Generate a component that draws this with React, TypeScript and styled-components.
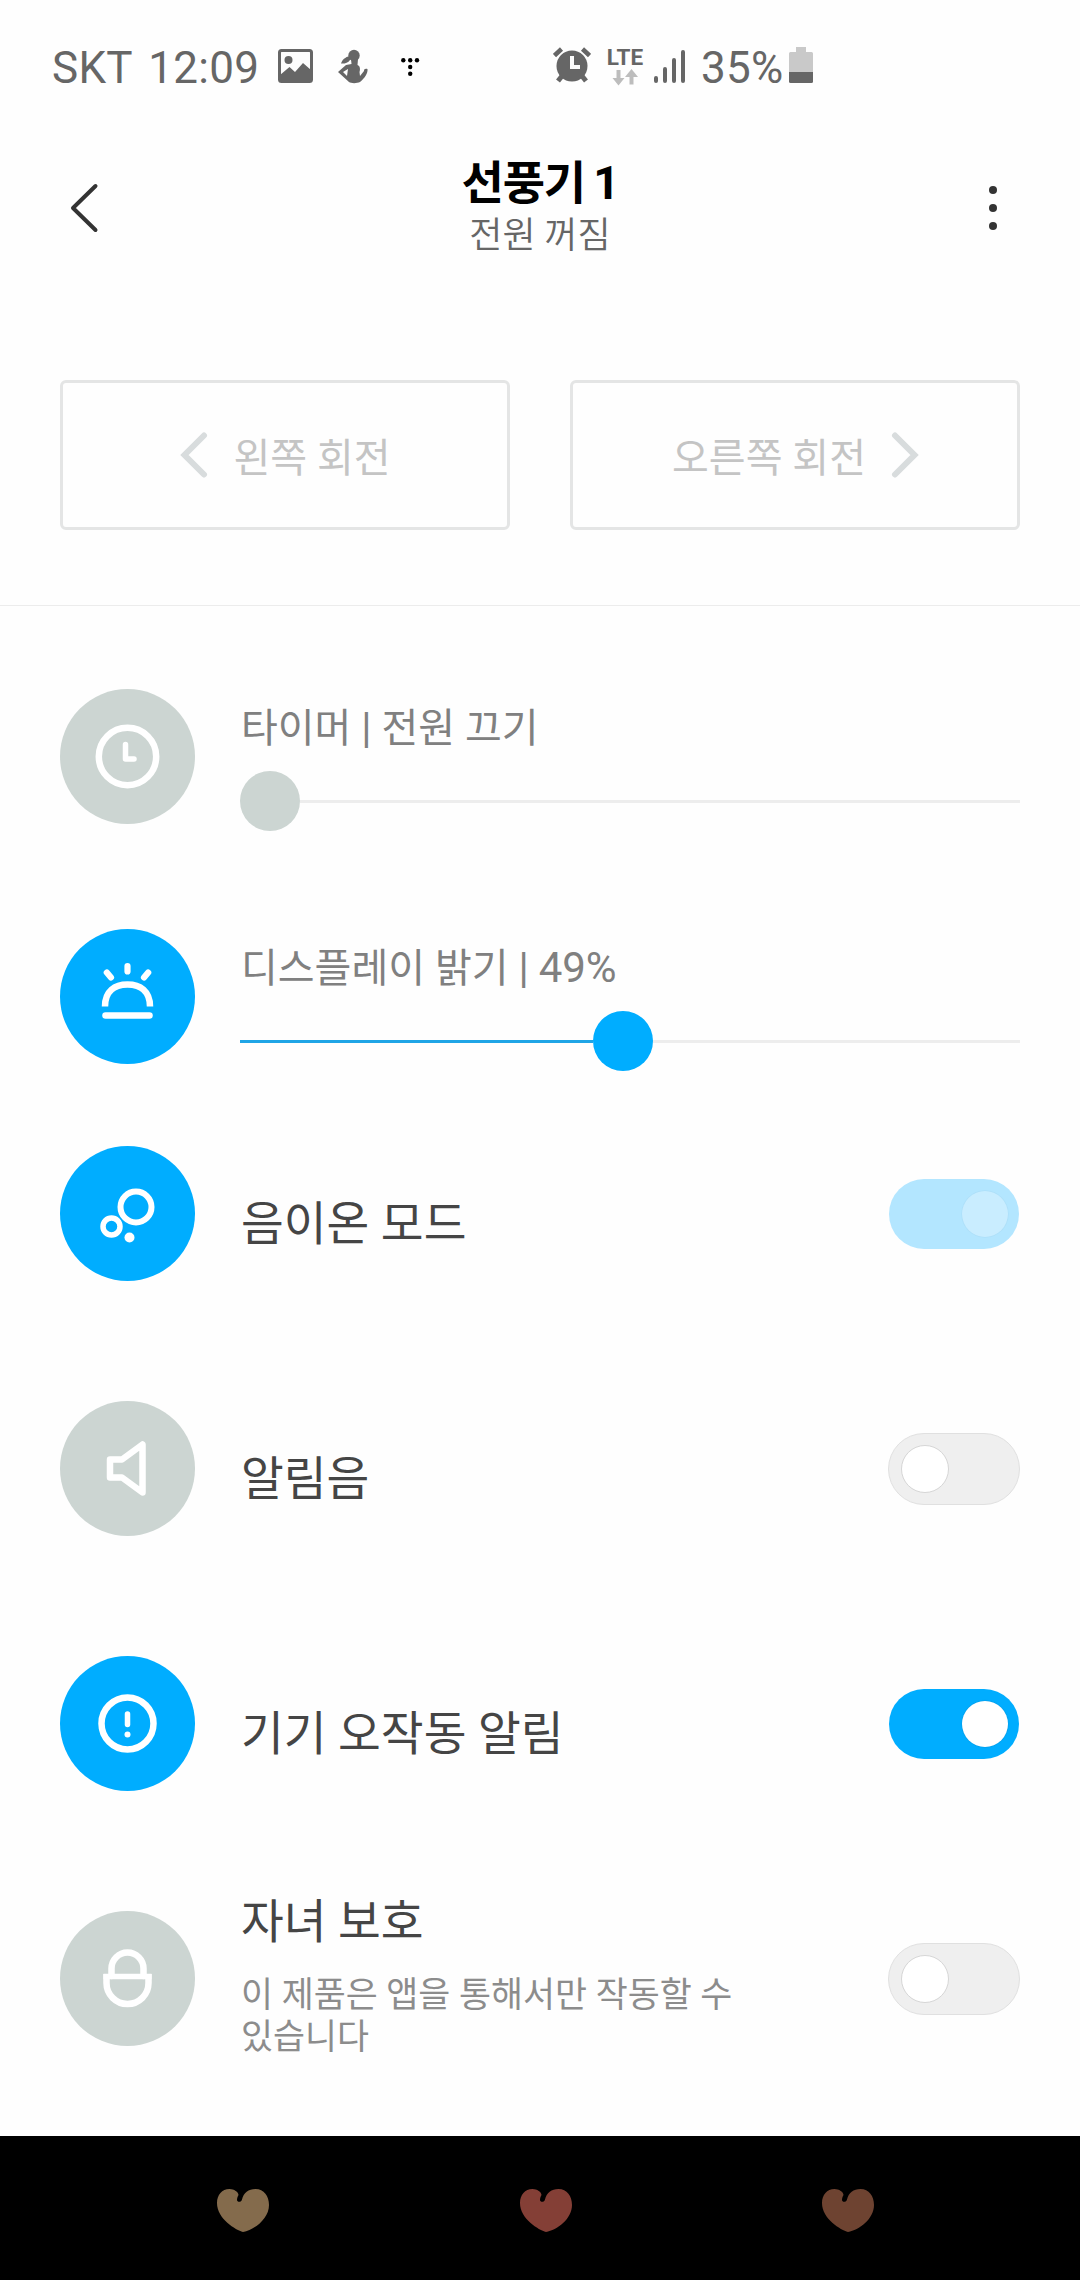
import React from "react";
import styled, { createGlobalStyle } from "styled-components";

const BLUE = "#00adff";
const GREY = "#ccd5d2";
const PAPER = "#fefefe";

const GlobalStyle = createGlobalStyle`
  * { box-sizing: border-box; }
  html, body { margin: 0; padding: 0; background: ${PAPER}; }
  body { font-family: Roboto, "Noto Sans CJK KR", sans-serif; }
  svg { display: block; }
`;

const Screen = styled.div`
  width: 1080px;
  height: 2280px;
  display: flex;
  flex-direction: column;
  background: ${PAPER};
  overflow: hidden;
`;

/* status bar */
const StatusBar = styled.div`
  height: 134px;
  display: flex;
  align-items: flex-start;
  padding: 42px 0 0 52px;
  color: #666;
  font: 400 44px/52px Roboto, sans-serif;
  white-space: nowrap;
`;
const StatusText = styled.span<{ $width: number; $left?: number }>`
  width: ${(p) => p.$width}px;
  margin-left: ${(p) => p.$left ?? 0}px;
  letter-spacing: 0.3px;
  word-spacing: 5px;
`;
const StatusIcon = styled.svg<{ $left: number; $top?: number }>`
  flex: none;
  margin-left: ${(p) => p.$left}px;
  margin-top: ${(p) => p.$top ?? 0}px;
`;
const Network = styled.div`
  width: 36px;
  margin: 3px 0 0 16px;
  display: flex;
  flex-direction: column;
  align-items: center;
  font: 700 22.5px/24px Roboto, sans-serif;
`;

/* header */
const Header = styled.header`
  height: 246px;
  display: grid;
  grid-template-columns: 200px 1fr 200px;
  align-items: start;
`;
const IconButton = styled.button<{ $pad: string }>`
  border: 0;
  background: none;
  padding: ${(p) => p.$pad};
`;
const Titles = styled.div`
  display: flex;
  flex-direction: column;
  align-items: center;
  padding-top: 19px;
`;
const Title = styled.h1`
  margin: 0;
  color: #000;
  font: 700 46px/60px Roboto, "Noto Sans CJK KR", sans-serif;
  letter-spacing: -1.2px;
  word-spacing: -2px;
`;
const Subtitle = styled.div`
  padding-top: 1px;
  color: #666;
  font: 350 36px/44px Roboto, "Noto Sans CJK KR", sans-serif;
`;

/* rotate buttons */
const RotateBar = styled.div`
  height: 226px;
  display: grid;
  grid-template-columns: 450px 450px;
  gap: 60px;
  padding: 0 60px;
  align-items: start;
  border-bottom: 1px solid #ececec;
`;
const RotateButton = styled.button`
  height: 150px;
  display: flex;
  align-items: center;
  justify-content: center;
  gap: 25px;
  border: 3px solid #e4e5e5;
  border-radius: 6px;
  background: ${PAPER};
  color: #c4c4c4;
  padding: 0 0 0 1px;
  font: 400 40px/60px Roboto, "Noto Sans CJK KR", sans-serif;
`;
const RotateText = styled.span`
  padding-top: 7px;
`;

/* settings */
const Settings = styled.main`
  flex: 1;
  padding: 83px 60px 0;
`;
const Group = styled.section<{ $gap: number; $top?: number }>`
  display: flex;
  flex-direction: column;
  gap: ${(p) => p.$gap}px;
  margin-top: ${(p) => p.$top ?? 0}px;
`;
const Row = styled.div`
  height: 135px;
  display: grid;
  grid-template-columns: 135px 1fr auto;
  grid-template-rows: 135px;
  column-gap: 45px;
  align-items: center;
`;
const Badge = styled.div<{ $on?: boolean }>`
  width: 135px;
  height: 135px;
  border-radius: 50%;
  background: ${(p) => (p.$on ? BLUE : GREY)};
`;
const SliderBody = styled.div`
  grid-column: 2 / 4;
  align-self: start;
`;
const SliderLabel = styled.div`
  height: 82px;
  padding: 9px 0 0 1px;
  color: #808080;
  font: 400 40px/60px Roboto, "Noto Sans CJK KR", sans-serif;
  white-space: nowrap;
`;
const SliderValue = styled.span`
  font-size: 42px;
`;
const SliderTrack = styled.div`
  display: flex;
  height: 60px;
`;
const SliderFill = styled.div`
  flex: none;
  height: 3px;
  margin-top: 29px;
  background: #1fa5e6;
`;
const SliderRest = styled.div`
  flex: 1;
  height: 3px;
  margin-top: 29px;
  background: #ededed;
`;
const SliderKnob = styled.div<{ $on?: boolean }>`
  flex: none;
  width: 60px;
  height: 60px;
  border-radius: 50%;
  background: ${(p) => (p.$on ? BLUE : GREY)};
`;
const SwitchBody = styled.div<{ $hint: boolean }>`
  padding: ${(p) => (p.$hint ? "0 0 10px 1px" : "21px 0 0 1px")};
`;
const SwitchLabel = styled.div`
  color: #454545;
  font: 400 46.5px/64px Roboto, "Noto Sans CJK KR", sans-serif;
`;
const Hint = styled.div`
  max-width: 560px;
  margin-top: 20px;
  color: #8c8c8c;
  font: 400 34.8px/42px Roboto, "Noto Sans CJK KR", sans-serif;
  word-break: keep-all;
`;
const Toggle = styled.div<{ $on?: boolean; $disabled?: boolean }>`
  width: ${(p) => (p.$on ? 130 : 132)}px;
  height: ${(p) => (p.$on ? 70 : 72)}px;
  margin-right: ${(p) => (p.$on ? 1 : 0)}px;
  padding: 0 ${(p) => (p.$on ? 11 : 12)}px;
  display: flex;
  align-items: center;
  justify-content: ${(p) => (p.$on ? "flex-end" : "flex-start")};
  border-radius: 36px;
  border: ${(p) => (p.$on ? "0" : "1px solid #e0e0e0")};
  background: ${(p) => (p.$disabled ? "#b3e6ff" : p.$on ? BLUE : "#efefef")};
`;
const ToggleKnob = styled.div<{ $on?: boolean; $disabled?: boolean }>`
  width: ${(p) => (p.$on ? 46 : 48)}px;
  height: ${(p) => (p.$on ? 46 : 48)}px;
  border-radius: 50%;
  border: ${(p) => (p.$on ? "0" : "1px solid #d6d6d6")};
  background: ${(p) => (p.$disabled ? "#c9edff" : "#fff")};
  box-shadow: ${(p) =>
    p.$on ? `0 0 1px 0.5px rgba(0, 70, 110, ${p.$disabled ? 0.06 : 0.18})` : "none"};
`;

/* navigation bar */
const NavBar = styled.nav`
  height: 144px;
  padding: 53px 206px 0 217px;
  display: flex;
  justify-content: space-between;
  background: #000;
`;

const Heart = ({ color }: { color: string }) => (
  <svg width="52" height="43" viewBox="0 0 52 43">
    <path
      fill={color}
      d="M26 43C19 41 0 30 0 14C0 6 5 0 12.500 0C17 0 21.500 3 21.500 6C20.500 8 20 9 20 11C20 13.500 24.500 13.500 25 10.500C26.500 4 31.500 0 38.500 0C47 0 52 7 52 16C52 30 37 41 26 43Z"
    />
  </svg>
);

type GlyphName = "timer" | "brightness" | "ion" | "sound" | "alert" | "lock";

const glyphs: Record<GlyphName, React.ReactNode> = {
  timer: (
    <>
      <circle cx="67.500" cy="67.500" r="28.700" strokeWidth="6.500" />
      <path d="M65.500 55.500V70H74" strokeWidth="5.500" />
    </>
  ),
  brightness: (
    <>
      <path d="M45.500 86.500H89.500" strokeWidth="6.500" />
      <path d="M45 77.500C45 62 55 55.500 67.500 55.500S90 62 90 77.500" strokeWidth="6.500" strokeLinecap="butt" />
      <path d="M67.500 37V42.500M46.800 43.500L51 48.500M88.200 43.500L84 48.500" strokeWidth="6.200" />
    </>
  ),
  ion: (
    <>
      <circle cx="76" cy="61" r="15.500" strokeWidth="6" />
      <circle cx="51.500" cy="80.500" r="8.500" strokeWidth="5.500" />
      <circle cx="69.500" cy="91.500" r="5" fill="#fff" stroke="none" />
    </>
  ),
  sound: <path d="M50 58.500H62L82.500 43.500V91.500L62 76.500H50Z" strokeWidth="6.500" />,
  alert: (
    <>
      <circle cx="67.500" cy="67.500" r="26" strokeWidth="6.500" />
      <path d="M67.500 58V68.500" strokeWidth="5.500" />
      <circle cx="67.500" cy="78.500" r="3" fill="#fff" stroke="none" />
    </>
  ),
  lock: (
    <>
      <path d="M43.500 65.500H91.500" strokeWidth="5.500" strokeLinecap="butt" />
      <path d="M51.500 65V57.500A16 16 0 0 1 83.500 57.500V65" strokeWidth="6.500" />
      <path d="M46.500 63V72A21 21 0 0 0 88.500 72V63" strokeWidth="6.500" strokeLinecap="butt" />
    </>
  ),
};

const Glyph = ({ name }: { name: GlyphName }) => (
  <svg width="135" height="135" viewBox="0 0 135 135" fill="none" stroke="#fff" strokeLinecap="round" strokeLinejoin="round">
    {glyphs[name]}
  </svg>
);

const Chevron = ({ right }: { right?: boolean }) => (
  <svg width="28" height="46" viewBox="0 0 28 46" fill="none" stroke="#d8dcdd" strokeWidth="6" strokeLinecap="round">
    <path d={right ? "M4 3.500L23.500 23L4 42.500" : "M24 3.500L4.500 23L24 42.500"} />
  </svg>
);

const sliders: { icon: GlyphName; label: string; state: string; value: number; on: boolean }[] = [
  { icon: "timer", label: "타이머", state: "전원 끄기", value: 0, on: false },
  { icon: "brightness", label: "디스플레이 밝기", state: "49%", value: 49, on: true },
];

const switches: { icon: GlyphName; label: string; hint?: string; on: boolean; disabled?: boolean }[] = [
  { icon: "ion", label: "음이온 모드", on: true, disabled: true },
  { icon: "sound", label: "알림음", on: false },
  { icon: "alert", label: "기기 오작동 알림", on: true },
  { icon: "lock", label: "자녀 보호", hint: "이 제품은 앱을 통해서만 작동할 수 있습니다", on: false },
];

export default function App() {
  return (
    <Screen>
      <GlobalStyle />
      <StatusBar>
        <StatusText $width={226}>SKT 12:09</StatusText>
        <StatusIcon $left={0} $top={7} width="35" height="34" viewBox="0 0 35 34">
          <rect x="1.500" y="1.500" width="32" height="31" rx="2" fill="none" stroke="#666" strokeWidth="3" />
          <circle cx="10.500" cy="11" r="4" fill="#666" />
          <path d="M2 26L11.500 18L17 23L25 14L33 21V32H2Z" fill="#666" />
        </StatusIcon>
        <StatusIcon $left={25} $top={7} width="30" height="35" viewBox="0 0 30 35" fill="#666">
          <circle cx="16" cy="6.500" r="5.700" />
          <path d="M12 7C7 8 4 11 3 14.500C6 15 10 14 12 11Z" />
          <path d="M13 10H20L19.500 16C22 17 22.500 20 21.500 23L22 27L26 22C26 20 27 19.500 29.500 20C30 24 27 29 22 33C19 34.500 13 34.500 11 33L0 23L8 16L13.500 15ZM5 23L9 27L10 20Z" fillRule="evenodd" />
        </StatusIcon>
        <StatusIcon $left={33} $top={16} width="19" height="19" viewBox="0 0 19 19" fill="#000">
          <circle cx="2.300" cy="2.300" r="2.200" />
          <circle cx="9.200" cy="2.300" r="2.200" />
          <circle cx="16" cy="2.300" r="2.200" />
          <circle cx="9.200" cy="9" r="2.200" />
          <circle cx="9.200" cy="15.700" r="2.200" />
        </StatusIcon>
        <StatusIcon $left={133} $top={5} width="38" height="36" viewBox="0 0 38 36" fill="none" stroke="#666">
          <path d="M1.500 8.500L8.500 2M36.500 8.500L29.500 2" strokeWidth="4.500" />
          <path d="M9 29L5 34M29 29L33 34" strokeWidth="5" />
          <circle cx="19" cy="19" r="15.500" fill="#666" stroke="none" />
          <path d="M19 9V20H27" stroke={PAPER} strokeWidth="4" />
        </StatusIcon>
        <Network>
          LTE
          <svg width="26" height="17" viewBox="0 0 26 17" fill="#bdbdbd">
            <path d="M4.500 1H8.500V9H12.500L6.500 16.500L0.500 9H4.500Z" />
            <path d="M17.500 15.500H21.500V8H26L19.500 0L13 8H17.500Z" />
          </svg>
        </Network>
        <StatusIcon $left={11} $top={7} width="31" height="35" viewBox="0 0 31 35" stroke="#666" strokeWidth="4" strokeLinecap="round">
          <path d="M2 29V32M11 20V32M20 11V32M29 3V32" />
        </StatusIcon>
        <StatusText $width={87} $left={16}>35%</StatusText>
        <StatusIcon $left={1} $top={5} width="24" height="36" viewBox="0 0 24 36">
          <path d="M7 0H17V5H22.500Q24 5 24 6.500V25H0V6.500Q0 5 1.500 5H7Z" fill="#c9c9c9" />
          <path d="M0 25H24V34.500Q24 36 22.500 36H1.500Q0 36 0 34.500Z" fill="#666" />
        </StatusIcon>
      </StatusBar>

      <Header>
        <IconButton $pad="49px 0 0 69px">
          <svg width="30" height="50" viewBox="0 0 30 50" fill="none" stroke="#333" strokeWidth="4" strokeLinecap="round" strokeLinejoin="round">
            <path d="M26.500 3L4 25L26.500 47" />
          </svg>
        </IconButton>
        <Titles>
          <Title>선풍기 1</Title>
          <Subtitle>전원 꺼짐</Subtitle>
        </Titles>
        <IconButton $pad="51px 0 0 108px">
          <svg width="10" height="46" viewBox="0 0 10 46" fill="#333">
            <circle cx="5" cy="5" r="4" />
            <circle cx="5" cy="23" r="4" />
            <circle cx="5" cy="41" r="4" />
          </svg>
        </IconButton>
      </Header>

      <RotateBar>
        <RotateButton>
          <Chevron />
          <RotateText>왼쪽 회전</RotateText>
        </RotateButton>
        <RotateButton>
          <RotateText>오른쪽 회전</RotateText>
          <Chevron right />
        </RotateButton>
      </RotateBar>

      <Settings>
        <Group $gap={105}>
          {sliders.map((s) => (
            <Row key={s.icon}>
              <Badge $on={s.on}>
                <Glyph name={s.icon} />
              </Badge>
              <SliderBody>
                <SliderLabel>
                  {s.label} <SliderValue>|</SliderValue> {s.value > 0 ? <SliderValue>{s.state}</SliderValue> : s.state}
                </SliderLabel>
                <SliderTrack>
                  <SliderFill style={{ width: `calc((100% - 60px) * ${s.value / 100})` }} />
                  <SliderKnob $on={s.on} />
                  <SliderRest />
                </SliderTrack>
              </SliderBody>
            </Row>
          ))}
        </Group>
        <Group $gap={120} $top={82}>
          {switches.map((s) => (
            <Row key={s.icon}>
              <Badge $on={s.on}>
                <Glyph name={s.icon} />
              </Badge>
              <SwitchBody $hint={!!s.hint}>
                <SwitchLabel>{s.label}</SwitchLabel>
                {s.hint && <Hint>{s.hint}</Hint>}
              </SwitchBody>
              <Toggle $on={s.on} $disabled={s.disabled}>
                <ToggleKnob $on={s.on} $disabled={s.disabled} />
              </Toggle>
            </Row>
          ))}
        </Group>
      </Settings>

      <NavBar>
        <Heart color="#846b4c" />
        <Heart color="#843f36" />
        <Heart color="#6e4331" />
      </NavBar>
    </Screen>
  );
}
